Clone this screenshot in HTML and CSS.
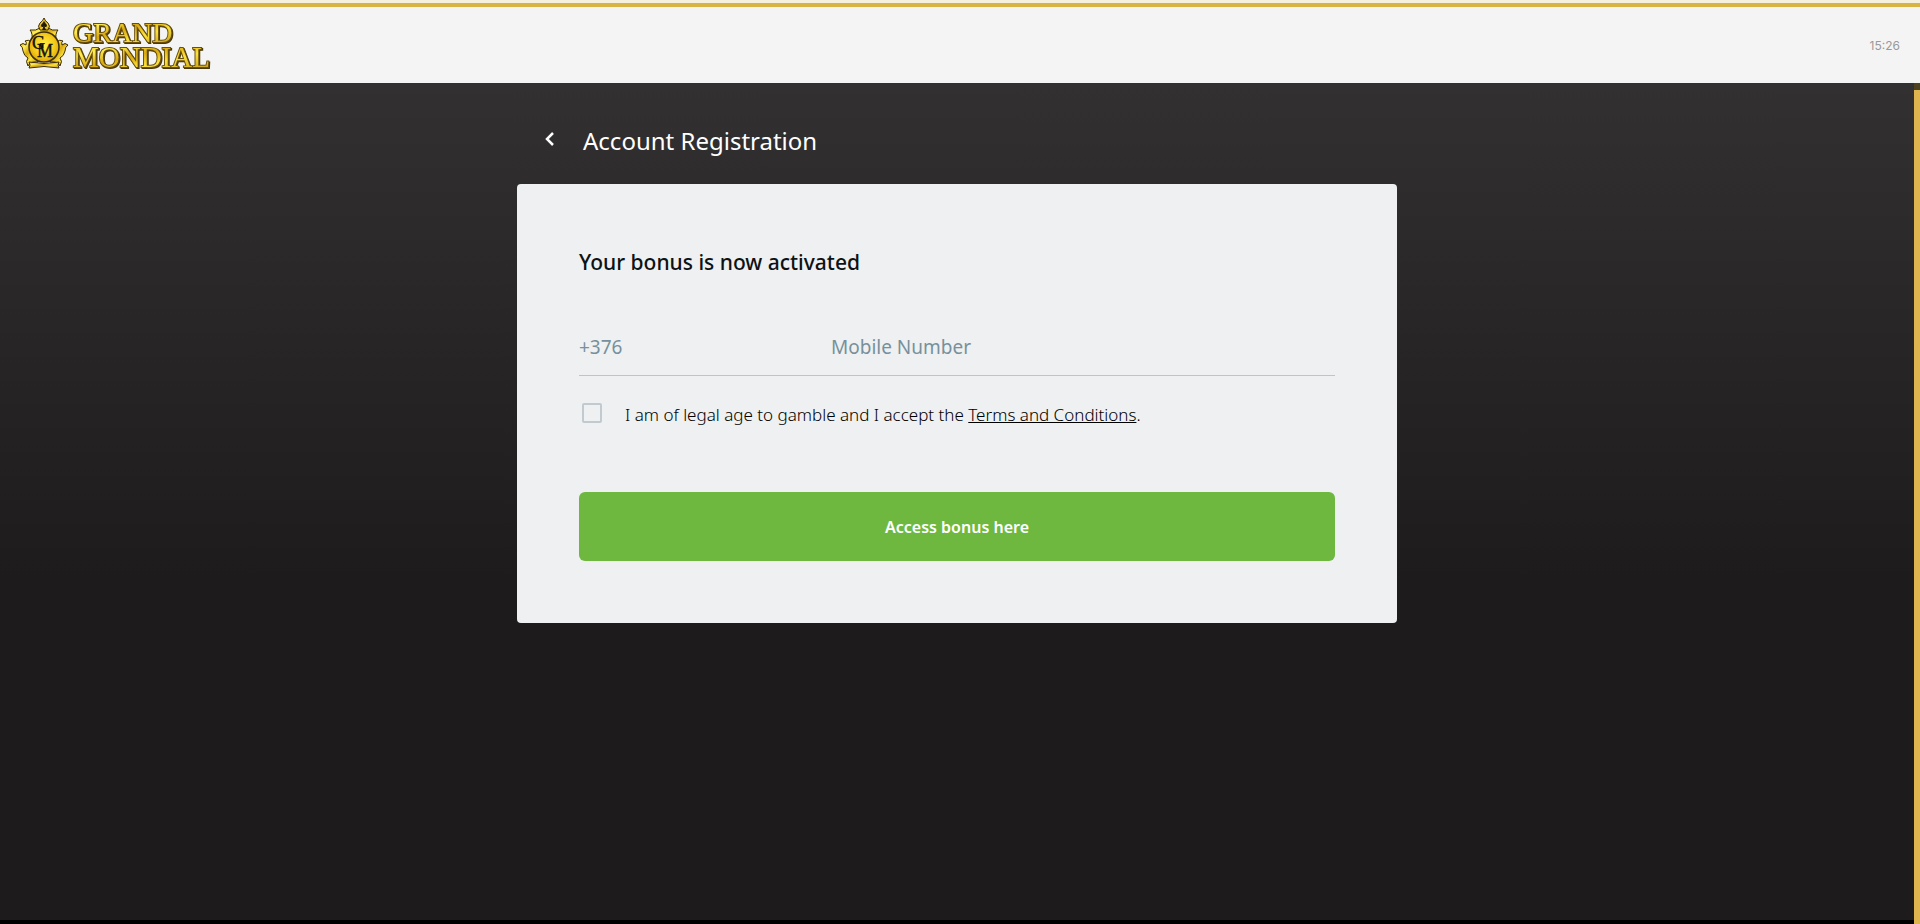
FILE: index.html
```
<!DOCTYPE html>
<html lang="en">
<head>
  <meta charset="UTF-8">
  <meta name="viewport" content="width=device-width, initial-scale=1.0">
  <title>Grand Mondial - Account Registration</title>
  <link rel="stylesheet" href="styles.css">
</head>
<body>
<header class="header">
  <a class="logo" href="#" aria-label="Grand Mondial">
    <svg width="194" height="56" viewBox="0 0 194 56">
      <defs>
        <linearGradient id="gold" x1="0" y1="0" x2="1" y2="1">
          <stop offset="0" stop-color="#d9a90c"/>
          <stop offset="0.25" stop-color="#ffee55"/>
          <stop offset="0.45" stop-color="#d8a810"/>
          <stop offset="0.65" stop-color="#fbe23c"/>
          <stop offset="1" stop-color="#b98c14"/>
        </linearGradient>
        <radialGradient id="coin" cx="0.5" cy="0.45" r="0.6">
          <stop offset="0" stop-color="#fff04a"/>
          <stop offset="0.6" stop-color="#f5cc1c"/>
          <stop offset="1" stop-color="#d39a08"/>
        </radialGradient>
      </defs>
      <g fill="url(#gold)" stroke="#3d2c05" stroke-width="1">
        <path d="M10 13 Q16 14 20 11 H28 Q32 14 38 13 Q35 16 36 25 H12 Q13 16 10 13 Z"/>
        <path d="M12 25 Q8 22 5 24 Q7 25 6 28 Q3 25 0 28 Q3 30 3 34 Q4 39 8 41 Q5 44 8 49 Q10 44 18 45 L14 34 Z"/>
        <path d="M36 25 Q40 22 43 24 Q41 25 42 28 Q45 25 48 28 Q45 30 45 34 Q44 39 40 41 Q43 44 40 49 Q38 44 30 45 L34 34 Z"/>
        <path d="M24 1 Q25 4 28 6 Q31 9 28 13 H20 Q17 9 20 6 Q23 4 24 1 Z"/>
      </g>
      <path d="M24 4 Q25 6 27 8 Q27 11 24.500 9.500 L26 13 H22 L23.500 9.500 Q21 11 21 8 Q23 6 24 4 Z" fill="#241b06"/>
      <circle cx="24" cy="30" r="15" fill="url(#coin)" stroke="#3d2c05" stroke-width="1.500"/>
      <path d="M9 45 Q24 48 39 45 Q37 48 39 51 Q24 48 9 51 Q11 48 9 45 Z" fill="url(#gold)" stroke="#3d2c05"/>
      <g class="monogram">
        <text x="12" y="32">G</text>
        <text x="17" y="40">M</text>
      </g>
      <g class="wordmark">
        <text x="53" y="25" font-size="28">GRAND</text>
        <text x="53" y="50" font-size="29">MONDIAL</text>
      </g>
    </svg>
  </a>
  <time class="clock">15:26</time>
</header>

<div class="page">
  <main class="content">
    <div class="title-row">
      <button class="back" type="button" aria-label="Back">
        <svg width="10" height="14" viewBox="0 0 10 14">
          <path d="M8 1 L2 7 L8 13" fill="none" stroke="#fff" stroke-width="2.500"/>
        </svg>
      </button>
      <h1>Account Registration</h1>
    </div>
    <form class="card">
      <h2>Your bonus is now activated</h2>
      <div class="phone">
        <input class="code" type="text" placeholder="+376" aria-label="Country code">
        <input class="number" type="tel" placeholder="Mobile Number" aria-label="Mobile Number">
      </div>
      <div class="terms">
        <input type="checkbox" id="terms">
        <label for="terms">I am of legal age to gamble and I accept the <a href="#">Terms and Conditions</a>.</label>
      </div>
      <button class="submit" type="submit">Access bonus here</button>
    </form>
  </main>
  <div class="scrollbar"></div>
</div>
</body>
</html>
```
FILE: styles.css
```
* {
  box-sizing: border-box;
}

body {
  margin: 0;
  min-height: 100vh;
  display: flex;
  flex-direction: column;
  font-family: "Noto Sans", "Open Sans", sans-serif;
  background: #1d1b1c;
}

.header {
  display: flex;
  justify-content: space-between;
  align-items: center;
  height: 83px;
  padding: 7px 20px 0;
  background: linear-gradient(#f6f1df 3px, #d9b445 3px, #d9b445 7px, #f4f4f4 7px);
}

.logo {
  display: flex;
}

.monogram {
  font-family: "Liberation Serif", serif;
  font-size: 18px;
  fill: #151208;
  stroke: #151208;
  stroke-width: 0.4px;
}

.wordmark {
  font-family: "Liberation Serif", serif;
  fill: url(#gold);
  stroke: #6b500a;
  stroke-width: 2px;
  paint-order: stroke;
  filter: drop-shadow(1px 1px 0 #4a390c);
}

.clock {
  font-family: Inter, sans-serif;
  font-size: 12px;
  color: #999;
}

.page {
  flex: 1;
  display: flex;
  border-bottom: 4px solid #000;
  background: linear-gradient(#323031, #1d1b1c 500px);
}

.content {
  flex: 1;
  padding: 37px 16px;
}

.title-row,
.card {
  max-width: 880px;
  margin: 0 auto;
}

.title-row {
  display: flex;
  align-items: center;
  height: 40px;
  padding-left: 20px;
}

.back {
  display: flex;
  justify-content: center;
  width: 26px;
  padding: 0 0 2px;
  border: 0;
  background: none;
}

h1 {
  margin: 0 0 0 20px;
  font-size: 24px;
  font-weight: 400;
  color: #fff;
}

.card {
  margin-top: 24px;
  padding: 62px;
  border-radius: 4px;
  background: #eef0f1;
}

h2 {
  margin: 0;
  font-size: 21px;
  line-height: 32px;
  font-weight: 500;
  color: #0d1214;
}

.phone {
  display: flex;
  margin-top: 40px;
  border-bottom: 1px solid #bcc6ca;
}

.phone input {
  height: 57px;
  padding: 0;
  border: 0;
  background: none;
  font-family: inherit;
  font-size: 19px;
  color: #78909c;
}

.phone input::placeholder {
  color: #78909c;
  opacity: 1;
}

.phone .code {
  width: 252px;
}

.phone .number {
  flex: 1;
}

.terms {
  display: flex;
  align-items: center;
  margin-top: 23px;
}

.terms input {
  appearance: none;
  width: 20px;
  height: 20px;
  margin: 0 23px 4px 3px;
  border: 2px solid #c0cacf;
  border-radius: 2px;
}

.terms label {
  font-size: 17px;
  line-height: 32px;
  font-weight: 300;
  color: #000;
}

.terms a {
  color: inherit;
}

.submit {
  width: 100%;
  height: 69px;
  margin-top: 61px;
  border: 0;
  border-radius: 6px;
  background: #6fb840;
  font-family: inherit;
  font-size: 16px;
  font-weight: 600;
  color: #fff;
}

.scrollbar {
  width: 6px;
  margin-bottom: -4px;
  border-top: 7px solid #4c4121;
  background: #deb44f;
}
```
